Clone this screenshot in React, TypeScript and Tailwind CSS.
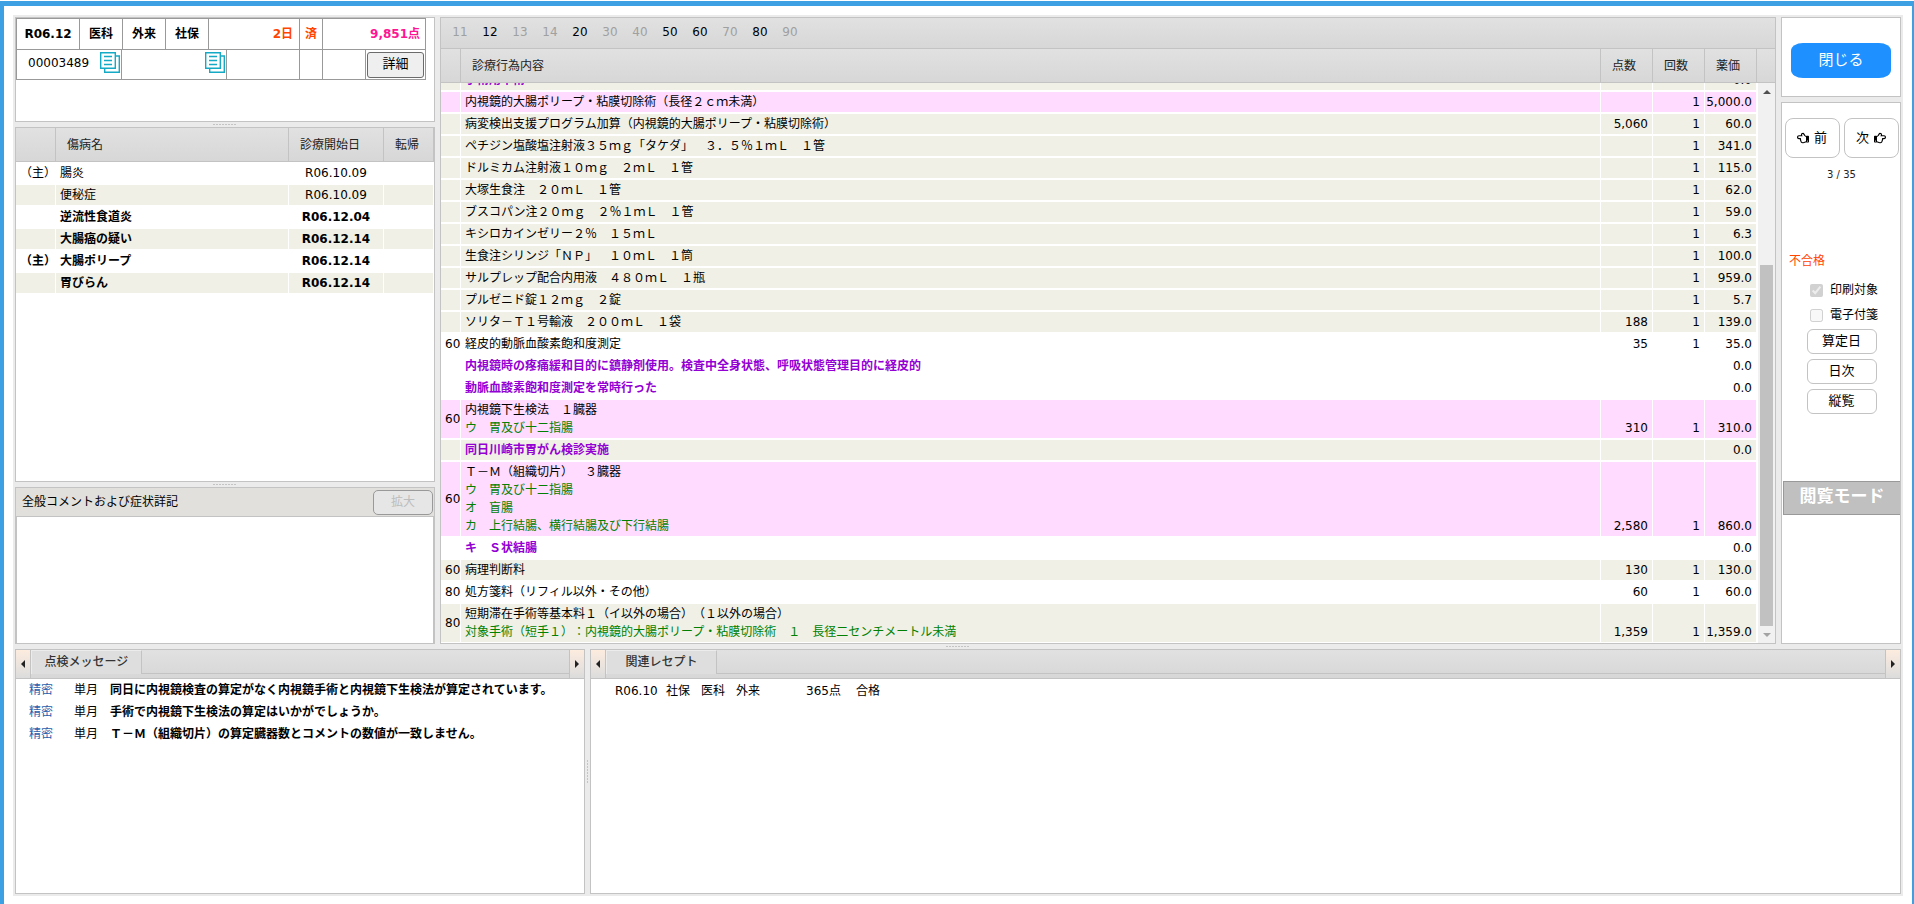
import { useState } from 'react';
import type { ReactNode } from 'react';
import { FaRegHandPointLeft, FaRegHandPointRight } from 'react-icons/fa';

type Diagnosis = { main?: boolean; name: string; date: string; bold?: boolean };

const diagnoses: Diagnosis[] = [
  { main: true, name: '腸炎', date: 'R06.10.09' },
  { name: '便秘症', date: 'R06.10.09' },
  { name: '逆流性食道炎', date: 'R06.12.04', bold: true },
  { name: '大腸癌の疑い', date: 'R06.12.14', bold: true },
  { main: true, name: '大腸ポリープ', date: 'R06.12.14', bold: true },
  { name: '胃びらん', date: 'R06.12.14', bold: true },
];

type Tone = 'plain' | 'shade' | 'pink';

type Act = {
  code?: string;
  tone: Tone;
  name: string;
  comment?: boolean;
  details?: string[];
  points?: string;
  count?: string;
  price: string;
};

const toneClass: Record<Tone, string> = {
  plain: 'bg-white',
  shade: 'bg-[#f0f0e6]',
  pink: 'bg-[#ffdbff]',
};

const acts: Act[] = [
  { tone: 'shade', name: '手術用中術', comment: true, price: '0.0' },
  { tone: 'pink', name: '内視鏡的大腸ポリープ・粘膜切除術（長径２ｃｍ未満）', count: '1', price: '5,000.0' },
  {
    tone: 'shade',
    name: '病変検出支援プログラム加算（内視鏡的大腸ポリープ・粘膜切除術）',
    points: '5,060',
    count: '1',
    price: '60.0',
  },
  { tone: 'shade', name: 'ペチジン塩酸塩注射液３５ｍｇ「タケダ」　３．５％１ｍＬ　１管', count: '1', price: '341.0' },
  { tone: 'shade', name: 'ドルミカム注射液１０ｍｇ　２ｍＬ　１管', count: '1', price: '115.0' },
  { tone: 'shade', name: '大塚生食注　２０ｍＬ　１管', count: '1', price: '62.0' },
  { tone: 'shade', name: 'ブスコパン注２０ｍｇ　２％１ｍＬ　１管', count: '1', price: '59.0' },
  { tone: 'shade', name: 'キシロカインゼリー２％　１５ｍＬ', count: '1', price: '6.3' },
  { tone: 'shade', name: '生食注シリンジ「ＮＰ」　１０ｍＬ　１筒', count: '1', price: '100.0' },
  { tone: 'shade', name: 'サルプレップ配合内用液　４８０ｍＬ　１瓶', count: '1', price: '959.0' },
  { tone: 'shade', name: 'プルゼニド錠１２ｍｇ　２錠', count: '1', price: '5.7' },
  { tone: 'shade', name: 'ソリタ－Ｔ１号輸液　２００ｍＬ　１袋', points: '188', count: '1', price: '139.0' },
  { code: '60', tone: 'plain', name: '経皮的動脈血酸素飽和度測定', points: '35', count: '1', price: '35.0' },
  {
    tone: 'plain',
    name: '内視鏡時の疼痛緩和目的に鎮静剤使用。検査中全身状態、呼吸状態管理目的に経皮的',
    comment: true,
    price: '0.0',
  },
  { tone: 'plain', name: '動脈血酸素飽和度測定を常時行った', comment: true, price: '0.0' },
  {
    code: '60',
    tone: 'pink',
    name: '内視鏡下生検法　１臓器',
    details: ['ウ　胃及び十二指腸'],
    points: '310',
    count: '1',
    price: '310.0',
  },
  { tone: 'shade', name: '同日川崎市胃がん検診実施', comment: true, price: '0.0' },
  {
    code: '60',
    tone: 'pink',
    name: 'Ｔ－Ｍ（組織切片）　３臓器',
    details: ['ウ　胃及び十二指腸', 'オ　盲腸', 'カ　上行結腸、横行結腸及び下行結腸'],
    points: '2,580',
    count: '1',
    price: '860.0',
  },
  { tone: 'plain', name: 'キ　Ｓ状結腸', comment: true, price: '0.0' },
  { code: '60', tone: 'shade', name: '病理判断料', points: '130', count: '1', price: '130.0' },
  { code: '80', tone: 'plain', name: '処方箋料（リフィル以外・その他）', points: '60', count: '1', price: '60.0' },
  {
    code: '80',
    tone: 'shade',
    name: '短期滞在手術等基本料１（イ以外の場合）（１以外の場合）',
    details: ['対象手術（短手１）：内視鏡的大腸ポリープ・粘膜切除術　１　長径二センチメートル未満'],
    points: '1,359',
    count: '1',
    price: '1,359.0',
  },
];

const categories = [
  { code: '11', active: false },
  { code: '12', active: true },
  { code: '13', active: false },
  { code: '14', active: false },
  { code: '20', active: true },
  { code: '30', active: false },
  { code: '40', active: false },
  { code: '50', active: true },
  { code: '60', active: true },
  { code: '70', active: false },
  { code: '80', active: true },
  { code: '90', active: false },
];

const messages = [
  '同日に内視鏡検査の算定がなく内視鏡手術と内視鏡下生検法が算定されています。',
  '手術で内視鏡下生検法の算定はいかがでしょうか。',
  'Ｔ－Ｍ（組織切片）の算定臓器数とコメントの数値が一致しません。',
];

const headBg = 'bg-linear-to-b from-[#e1e1e1] to-[#d7d7d7]';

function DocumentsIcon() {
  return (
    <svg width="20" height="21" viewBox="0 0 20 21" fill="none" stroke="#14a9c4" strokeWidth="1.4">
      <path d="M16 4H19.3V20.3H4.7V17" />
      <path d="M0.7 0.7H15.3V16.3H0.7Z" />
      <path d="M4 4.5H12M4 8.5H12M4 12.5H12" />
    </svg>
  );
}

/* ===== Splitter bars ===== */
function Splitter() {
  return (
    <div className="flex h-[5px] shrink-0 items-center justify-center">
      <span className="h-px w-6 bg-[repeating-linear-gradient(90deg,#c4c4c4_0_2px,#ebebeb_2px_3px)]" />
    </div>
  );
}

function VerticalSplitter() {
  return (
    <div className="flex w-[5px] shrink-0 items-center justify-center">
      <span className="h-6 w-px bg-[repeating-linear-gradient(180deg,#c4c4c4_0_2px,#ebebeb_2px_3px)]" />
    </div>
  );
}

/* ===== Receipt summary ===== */
function ReceiptSummary() {
  return (
    <section className="h-[105px] shrink-0 border border-[#c3c3c3] bg-white">
      <div className="mr-2 border border-[#999]">
        <div className="flex h-[31px] divide-x divide-[#999] border-b border-[#999] text-center leading-[30px] font-bold">
          <span className="w-[63px]">R06.12</span>
          <span className="w-[43px]">医科</span>
          <span className="w-[43px]">外来</span>
          <span className="w-[43px]">社保</span>
          <span className="flex-1 pr-[6px] text-right text-[#ff4500]">2日</span>
          <span className="w-[23px] text-[#ff4500]">済</span>
          <span className="w-[102px] pr-[5px] text-right text-[#ff1493]">9,851点</span>
        </div>
        <div className="flex h-[29px] divide-x divide-[#999]">
          <div className="flex w-[105px] items-center justify-between pr-px pb-1 pl-[11px]">
            00003489
            <button type="button" aria-label="患者番号をコピー">
              <DocumentsIcon />
            </button>
          </div>
          <div className="flex w-[105px] items-center justify-end pr-px pb-1">
            <button type="button" aria-label="氏名をコピー">
              <DocumentsIcon />
            </button>
          </div>
          <span className="flex-1" />
          <span className="w-[23px]" />
          <span className="w-[43px]" />
          <div className="flex w-[59px] items-center justify-center">
            <button
              type="button"
              className="h-[26px] w-[57px] rounded-[3px] border border-[#6b6b6b] bg-[#efefef] pb-[2px] text-[13px]"
            >
              詳細
            </button>
          </div>
        </div>
      </div>
    </section>
  );
}

/* ===== Diagnosis list ===== */
function DiagnosisList() {
  return (
    <section className="min-h-0 flex-1 overflow-hidden border border-[#c3c3c3] bg-white">
      <table className="w-full table-fixed border-separate border-spacing-0">
        <colgroup>
          <col className="w-[40px]" />
          <col />
          <col className="w-[95px]" />
          <col className="w-[50px]" />
        </colgroup>
        <thead>
          <tr className="h-[34px] text-left">
            {['', '傷病名', '診療開始日', '転帰'].map((label) => (
              <th
                key={label}
                className={`border-r border-b border-[#c3c3c3] pl-[11px] font-normal text-[#222] ${headBg}`}
              >
                {label}
              </th>
            ))}
          </tr>
        </thead>
        <tbody>
          {diagnoses.map((row, i) => {
            const cell = `border-y border-r border-white py-px ${i % 2 ? 'bg-[#f0f0e6]' : 'bg-white'}`;
            return (
              <tr key={row.name} className={row.bold ? 'font-bold' : ''}>
                <td className={`${cell} pl-1 whitespace-nowrap`}>{row.main ? '（主）' : ''}</td>
                <td className={`${cell} pl-1`}>{row.name}</td>
                <td className={`${cell} text-center`}>{row.date}</td>
                <td className={cell} />
              </tr>
            );
          })}
        </tbody>
      </table>
    </section>
  );
}

/* ===== General comments ===== */
function GeneralComments() {
  return (
    <section className="flex h-[157px] shrink-0 flex-col border border-[#c3c3c3] bg-white">
      <div className="flex h-[28px] items-center justify-between bg-[#e1e0dc] pr-px pl-[6px]">
        <label htmlFor="general-comment">全般コメントおよび症状詳記</label>
        <button
          type="button"
          disabled
          className="h-[25px] w-[60px] rounded-[5px] border border-[#999] bg-[#e6e6e6] text-[#bdbdbd]"
        >
          拡大
        </button>
      </div>
      <textarea
        id="general-comment"
        readOnly
        className="w-full flex-1 resize-none border border-b-0 border-[#c3c3c3] bg-white outline-none"
      />
    </section>
  );
}

/* ===== Medical acts ===== */
function ActRow({ act }: { act: Act }) {
  const cell = `border-y border-r border-white py-px ${toneClass[act.tone]}`;
  return (
    <tr>
      <td className={`${cell} pl-1 align-middle`}>{act.code}</td>
      <td className={`${cell} pl-1`}>
        <div className={act.comment ? 'font-bold text-[#9400d3]' : ''}>{act.name}</div>
        {act.details?.map((detail) => (
          <div key={detail} className="text-[#008000]">
            {detail}
          </div>
        ))}
      </td>
      <td className={`${cell} pr-1 text-right align-bottom`}>{act.points}</td>
      <td className={`${cell} pr-1 text-right align-bottom`}>{act.count}</td>
      <td className={`${cell} pr-1 text-right align-bottom`}>{act.price}</td>
    </tr>
  );
}

function ScrollBar() {
  return (
    <div className="flex w-[17px] shrink-0 flex-col bg-[#f1f1f1]">
      <button type="button" aria-label="上へスクロール" className="flex h-[17px] items-center justify-center">
        <span className="border-x-4 border-b-4 border-x-transparent border-b-[#505050]" />
      </button>
      <div className="flex flex-1 flex-col px-[2px]">
        <div className="grow-[165]" />
        <div className="grow-[361] bg-[#c1c1c1]" />
      </div>
      <button type="button" aria-label="下へスクロール" className="flex h-[17px] items-center justify-center">
        <span className="border-x-4 border-t-4 border-x-transparent border-t-[#a3a3a3]" />
      </button>
    </div>
  );
}

function MedicalActs() {
  return (
    <section className="flex min-w-0 flex-1 flex-col border border-[#c3c3c3] bg-white">
      <nav className={`flex h-[31px] shrink-0 items-center border-b border-[#c3c3c3] pl-1 ${headBg}`}>
        {categories.map(({ code, active }) => (
          <button
            key={code}
            type="button"
            disabled={!active}
            className={`w-[30px] pb-[2px] text-center ${active ? 'text-black' : 'text-[#a0a0a0]'}`}
          >
            {code}
          </button>
        ))}
      </nav>
      <table className="w-full shrink-0 table-fixed border-separate border-spacing-0">
        <colgroup>
          <col className="w-[20px]" />
          <col />
          <col className="w-[52px]" />
          <col className="w-[52px]" />
          <col className="w-[52px]" />
          <col className="w-[18px]" />
        </colgroup>
        <thead>
          <tr className="h-[34px] text-left">
            {['', '診療行為内容', '点数', '回数', '薬価'].map((label) => (
              <th
                key={label}
                className={`border-r border-b border-[#c3c3c3] pl-[11px] font-normal text-[#222] ${headBg}`}
              >
                {label}
              </th>
            ))}
            <th className={`border-b border-[#c3c3c3] ${headBg}`} />
          </tr>
        </thead>
      </table>
      <div className="flex min-h-0 flex-1">
        {/* the list is parked at its last row */}
        <div className="flex min-w-0 flex-1 flex-col justify-end overflow-hidden pr-px">
          <table className="w-full shrink-0 table-fixed border-separate border-spacing-0">
            <colgroup>
              <col className="w-[20px]" />
              <col />
              <col className="w-[52px]" />
              <col className="w-[52px]" />
              <col className="w-[52px]" />
            </colgroup>
            <tbody>
              {acts.map((act) => (
                <ActRow key={act.name} act={act} />
              ))}
            </tbody>
          </table>
        </div>
        <ScrollBar />
      </div>
    </section>
  );
}

/* ===== Right side actions ===== */
type CheckFieldProps = { label: string; checked: boolean; onChange: (value: boolean) => void };

function CheckField({ label, checked, onChange }: CheckFieldProps) {
  return (
    <label className="flex items-center gap-[7px]">
      <input
        type="checkbox"
        disabled
        checked={checked}
        onChange={(e) => onChange(e.target.checked)}
        className="size-[13px]"
      />
      {label}
    </label>
  );
}

function SideActions() {
  const [printTarget, setPrintTarget] = useState(true);
  const [stickyNote, setStickyNote] = useState(false);

  const stepButton =
    'flex h-10 w-[55px] items-center justify-center gap-[5px] rounded-lg border border-[#c3c3c3] bg-white pb-px text-[13px]';

  return (
    <aside className="flex w-[120px] shrink-0 flex-col gap-[5px]">
      <div className="flex h-[80px] shrink-0 items-center justify-center border border-[#c3c3c3] bg-white pt-[7px]">
        <button
          type="button"
          className="h-[35px] w-[100px] rounded-[12px/8px] bg-[#1e90ff] pb-[2px] text-[15px] text-white"
        >
          閉じる
        </button>
      </div>
      <div className="flex flex-1 flex-col border border-[#c3c3c3] bg-white pt-[15px] pl-px">
        <div className="flex justify-center gap-1">
          <button type="button" className={stepButton}>
            <FaRegHandPointLeft className="size-3" />前
          </button>
          <button type="button" className={stepButton}>
            次<FaRegHandPointRight className="size-3" />
          </button>
        </div>
        <p className="mt-[8px] text-center text-[10px] text-[#222]">3 / 35</p>
        <p className="mt-[68px] pl-[6px] text-[#ff4500]">不合格</p>
        <div className="mt-[11px] flex flex-col gap-[7px] pl-[27px]">
          <CheckField label="印刷対象" checked={printTarget} onChange={setPrintTarget} />
          <CheckField label="電子付箋" checked={stickyNote} onChange={setStickyNote} />
        </div>
        <div className="mt-[5px] flex flex-col items-center gap-[5px]">
          {['算定日', '日次', '縦覧'].map((label) => (
            <button
              key={label}
              type="button"
              className="h-[25px] w-[70px] rounded-[6px] border border-[#c3c3c3] bg-white pb-[2px] text-[13px]"
            >
              {label}
            </button>
          ))}
        </div>
        <div className="mt-[67px] h-[34px] border border-r-0 border-[#999] bg-[#c0c0c0] text-center text-[17px] leading-[28px] font-bold text-white">
          閲覧モード
        </div>
      </div>
    </aside>
  );
}

/* ===== Bottom tab panels ===== */
function TabPanel({ title, className, children }: { title: string; className: string; children: ReactNode }) {
  const arrow = 'flex w-[15px] items-center justify-center border-[#c3c3c3] bg-linear-to-b from-[#fdecdf] to-[#dcdcdc]';
  return (
    <section className={`flex flex-col border border-[#c3c3c3] bg-white ${className}`}>
      <div className={`flex h-[29px] shrink-0 border-b border-[#c3c3c3] ${headBg}`}>
        <button type="button" aria-label="前のタブ" className={`${arrow} border-r`}>
          <span className="border-y-4 border-r-4 border-y-transparent border-r-[#222]" />
        </button>
        <div className="flex h-[24px] flex-1 border-b border-[#c3c3c3]" role="tablist">
          <button
            type="button"
            role="tab"
            aria-selected
            className="-mb-px w-[111px] border-t border-r border-l border-t-[#ececec] border-r-[#c3c3c3] border-l-[#ececec] bg-[#dedede] pb-[2px] font-medium text-[#333]"
          >
            {title}
          </button>
        </div>
        <button type="button" aria-label="次のタブ" className={`${arrow} border-l`}>
          <span className="border-y-4 border-l-4 border-y-transparent border-l-[#222]" />
        </button>
      </div>
      {children}
    </section>
  );
}

function CheckMessages() {
  return (
    <TabPanel title="点検メッセージ" className="w-[570px] shrink-0">
      <ul>
        {messages.map((message) => (
          <li key={message} className="flex h-[22px] items-center pl-[13px]">
            <a href="#detail" className="w-[45px] text-[#1f5fae]">
              精密
            </a>
            <span className="w-9">単月</span>
            <span className="font-bold whitespace-nowrap">{message}</span>
          </li>
        ))}
      </ul>
    </TabPanel>
  );
}

function RelatedReceipts() {
  return (
    <TabPanel title="関連レセプト" className="min-w-0 flex-1">
      <div className="flex h-6 items-center pl-6">
        <span className="w-[51px]">R06.10</span>
        <span className="w-[35px]">社保</span>
        <span className="w-[35px]">医科</span>
        <span className="w-[35px]">外来</span>
        <span className="w-[70px] text-right">365点</span>
        <span className="ml-[15px]">合格</span>
      </div>
    </TabPanel>
  );
}

export default function App() {
  return (
    <div className="h-screen bg-white pt-px font-['DejaVu_Sans','Noto_Sans_CJK_JP',sans-serif] text-[12px] leading-[18px] text-black [text-spacing-trim:space-all]">
      <div className="flex h-full flex-col border-t-5 border-r-2 border-l-4 border-[#3ca0e2] px-[9px] pt-[9px] pb-2">
        <main className="flex min-h-0 flex-1 flex-col bg-[#ebebeb] p-[2px]">
          <div className="flex min-h-0 flex-1 gap-[5px]">
            <div className="flex w-[420px] shrink-0 flex-col">
              <ReceiptSummary />
              <Splitter />
              <DiagnosisList />
              <Splitter />
              <GeneralComments />
            </div>
            <MedicalActs />
            <SideActions />
          </div>
          <Splitter />
          <div className="flex h-[245px] shrink-0">
            <CheckMessages />
            <VerticalSplitter />
            <RelatedReceipts />
          </div>
        </main>
      </div>
    </div>
  );
}
